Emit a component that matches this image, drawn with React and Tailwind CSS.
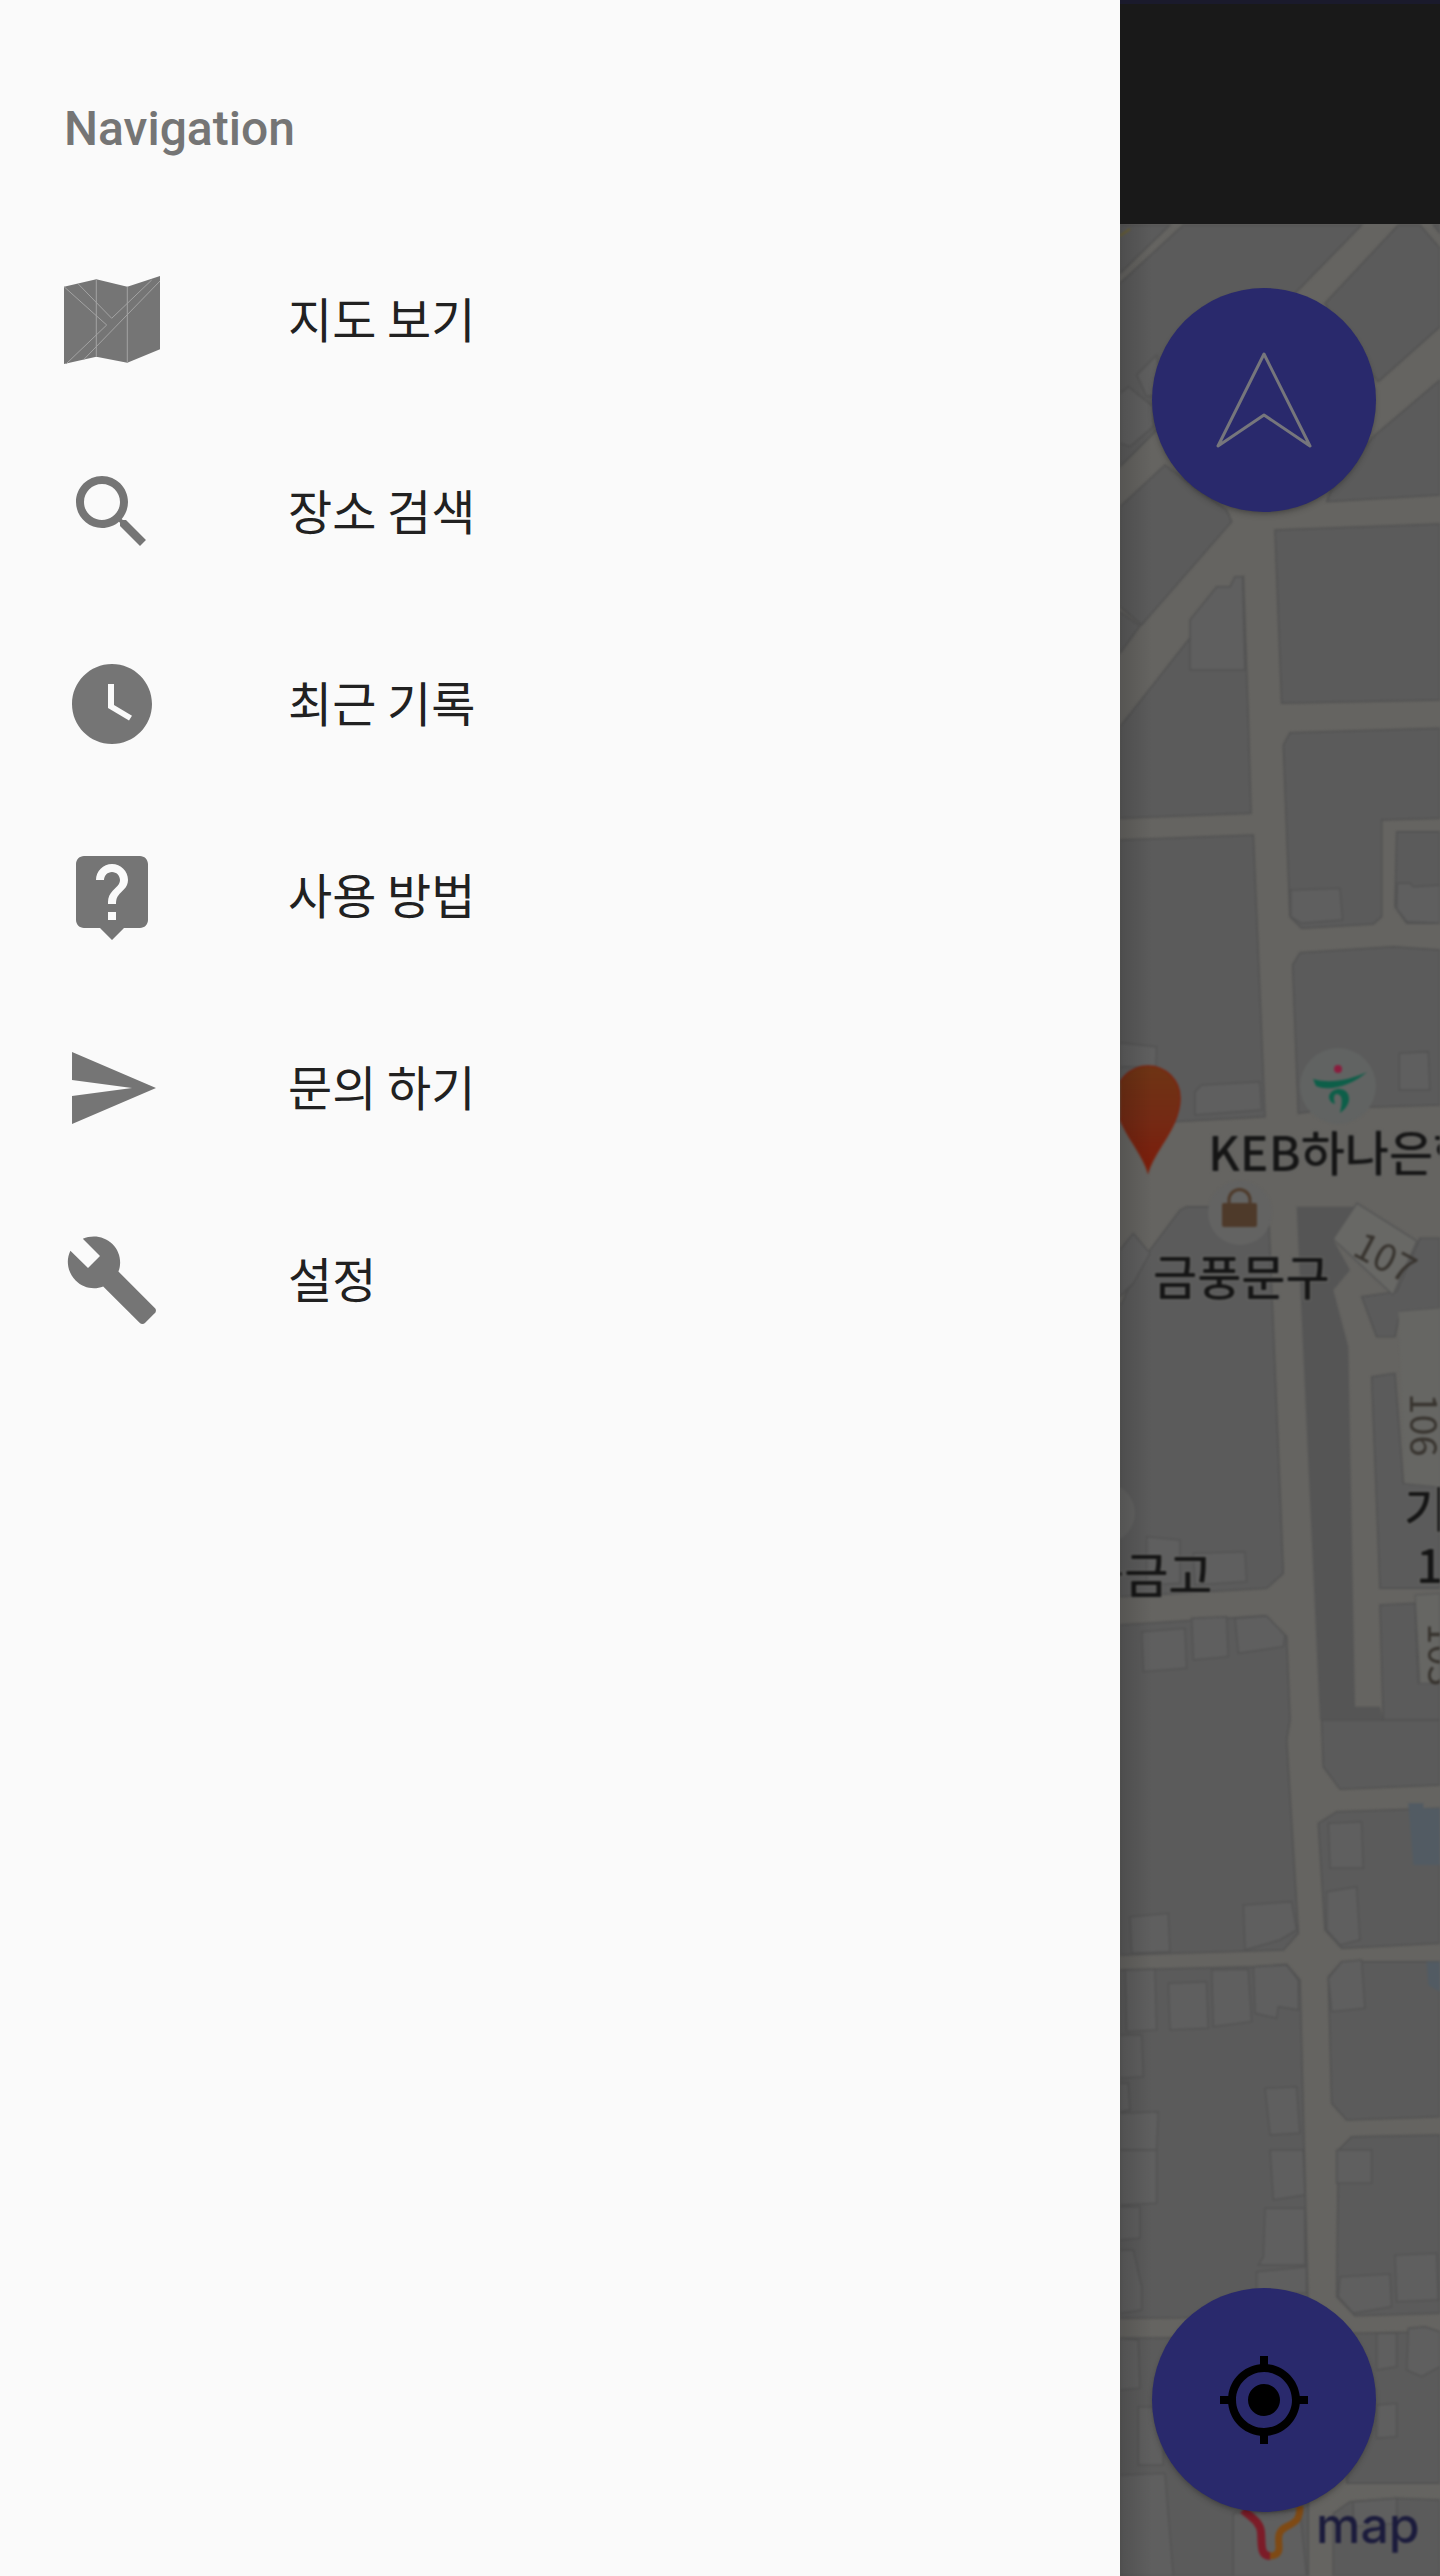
import React from 'react';

// map shapes are noted as read off the reference: x / y are 3x crop coordinates, base is the crop's top
const pts = (base, list) => list.map(([x, y]) => `${1120 + x / 3},${base + y / 3}`).join(' ');

const blocks = [
  [220, [[0,190],[190,15],[725,15],[540,205],[120,620],[0,740]]],
  [220, [[0,15],[150,15],[0,160]]],
  [220, [[615,250],[835,15],[900,15],[960,85],[960,320],[775,485],[700,400]]],
  [220, [[940,15],[960,15],[960,40]]],
  [220, [[760,650],[960,480],[960,825],[620,845],[640,790]]],
  [220, [[0,860],[135,735],[320,870],[335,905],[65,1215],[0,1160]]],
  [220, [[0,1175],[60,1218],[0,1300]]],
  [220, [[0,1520],[205,1260],[370,1070],[385,1500],[393,1780],[0,1795]]],
  [220, [[465,930],[960,912],[960,1440],[485,1450]]],
  [720, [[0,360],[400,345],[435,1190],[160,1205],[0,1200]]],
  [720, [[490,75],[510,38],[960,25],[960,295],[785,300],[785,590],[760,612],[545,625],[510,590]]],
  [720, [[830,335],[960,335],[960,610],[860,610],[825,560]]],
  [720, [[518,735],[540,698],[820,680],[960,690],[960,1155],[640,1165],[535,1180]]],
  [1220, [[0,260],[60,130],[180,-30],[200,-40],[445,-40],[490,1060],[440,1105],[0,1130]]],
  [1220, [[725,230],[830,215],[880,100],[900,55],[960,55],[960,265],[840,275],[825,350],[770,350]]],
  [1220, [[755,470],[825,460],[850,790],[960,800],[960,1105],[780,1105]]],
  [1220, [[780,1155],[885,1150],[895,1390],[960,1390],[960,1500],[790,1500]]],
  [1220, [[0,1215],[435,1187],[500,1250],[510,1500],[500,1560],[535,2140],[490,2190],[0,2205]]],
  [1720, [[605,0],[960,0],[960,195],[660,208],[610,140]]],
  [1720, [[595,310],[650,275],[960,265],[960,670],[665,685],[615,630]]],
  [1720, [[0,750],[400,740],[500,733],[540,780],[565,1790],[0,1795]]],
  [1720, [[625,770],[665,725],[960,725],[960,1190],[680,1200],[635,1150]]],
  [1720, [[655,1290],[695,1250],[960,1245],[960,1780],[705,1787],[650,1730]]],
  [2150, [[0,565],[565,560],[565,1278],[0,1278]]],
  [2150, [[700,550],[960,545],[960,1000],[680,1000]]],
  [2150, [[690,1055],[830,1045],[960,1050],[960,1278],[640,1278],[640,1090]]],
];

const buildings = [
  [220, [[210,1200],[290,1100],[330,1100],[345,1070],[368,1070],[375,1350],[210,1350]]],
  [220, [[50,465],[110,405],[130,520],[80,530]]],
  [220, [[0,520],[25,500],[100,560],[100,620],[30,680],[0,670]]],
  [720, [[512,510],[660,505],[668,600],[545,610],[512,590]]],
  [720, [[832,490],[870,490],[880,500],[960,495],[960,610],[860,605],[830,565]]],
  [720, [[0,968],[110,980],[108,1040],[0,1040]]],
  [720, [[225,1115],[245,1095],[420,1085],[425,1170],[225,1185]]],
  [720, [[838,1000],[925,995],[930,1110],[838,1110]]],
  [1220, [[0,90],[40,40],[90,100],[40,190],[0,230]]],
  [1220, [[220,1000],[375,995],[380,1085],[225,1095]]],
  [1220, [[80,950],[180,960],[180,1090],[80,1095]]],
  [1220, [[65,1235],[195,1225],[200,1345],[70,1355]]],
  [1220, [[215,1195],[320,1190],[325,1310],[220,1320]]],
  [1220, [[345,1195],[440,1188],[495,1245],[490,1280],[355,1300]]],
  [1720, [[30,590],[145,580],[150,695],[35,700]]],
  [1720, [[370,555],[515,545],[530,630],[480,660],[375,690]]],
  [1720, [[625,310],[725,305],[730,445],[630,445]]],
  [1720, [[620,515],[710,500],[720,660],[660,675],[620,630]]],
  [1720, [[15,750],[105,748],[110,930],[20,935]]],
  [1720, [[145,790],[260,785],[265,925],[150,930]]],
  [1720, [[275,750],[385,748],[395,905],[280,920]]],
  [1720, [[400,740],[500,735],[535,780],[535,870],[475,860],[470,895],[405,880]]],
  [1720, [[0,945],[65,945],[70,1070],[0,1075]]],
  [1720, [[0,1090],[25,1090],[30,1170],[0,1175]]],
  [1720, [[0,1180],[115,1175],[110,1290],[0,1290]]],
  [1720, [[435,1105],[530,1100],[540,1240],[450,1245]]],
  [1720, [[625,775],[665,725],[725,720],[735,865],[635,875]]],
  [2150, [[450,0],[550,0],[555,135],[460,150]]],
  [2150, [[435,175],[555,175],[555,345],[415,345],[430,320]]],
  [2150, [[410,365],[560,350],[560,430],[410,430]]],
  [2150, [[0,0],[110,0],[110,160],[0,165]]],
  [2150, [[0,170],[60,170],[60,265],[0,270]]],
  [2150, [[0,300],[40,300],[65,410],[65,480],[0,490]]],
  [2150, [[650,0],[755,0],[755,100],[650,100]]],
  [2150, [[825,315],[950,310],[955,450],[830,455]]],
  [2150, [[660,380],[810,372],[815,470],[700,490],[655,440]]],
  [2150, [[865,535],[915,530],[960,545],[960,650],[905,680],[860,660]]],
  [2150, [[0,565],[55,570],[60,715],[0,720]]],
  [2150, [[55,770],[130,770],[130,945],[55,945]]],
  [2150, [[0,975],[135,970],[160,1278],[0,1278]]],
  [2150, [[340,1090],[540,1080],[560,1278],[340,1278]]],
  [2150, [[770,550],[830,550],[830,650],[770,660]]],
  [2150, [[770,765],[830,760],[830,860],[770,865]]],
  [2150, [[700,1055],[830,1045],[830,1120],[700,1130]]],
];

const MapIcon = () => (
  <svg viewBox="0 0 96 96" className="w-24 h-24">
    <polygon points="0,14.7 32.3,7.3 63.3,14.7 96,4 96,77.3 63.3,90.7 32.3,84.7 0,92" fill="#757575" />
    <g fill="none" stroke="#a3a3a3" strokeWidth="1">
      <path d="M32.3 7.3V84.7M63.3 14.7V90.7" />
      <path d="M0 14.7L42.7 53 2 92M14.3 12L47.7 46.3 87.7 8M19.3 88L96 9" />
    </g>
  </svg>
);

const MaterialIcon = ({ d }) => (
  <svg viewBox="0 0 24 24" className="w-24 h-24" fill="#757575" fillRule="evenodd">
    <path d={d} />
  </svg>
);

const menuItems = [
  { label: '지도 보기', icon: <MapIcon /> },
  {
    label: '장소 검색',
    icon: <MaterialIcon d="M15.5 14h-.79l-.28-.27C15.41 12.59 16 11.11 16 9.5 16 5.91 13.09 3 9.5 3S3 5.91 3 9.5 5.91 16 9.5 16c1.61 0 3.09-.59 4.23-1.57l.27.28v.79l5 4.99L20.49 19l-4.99-5zm-6 0C7.01 14 5 11.99 5 9.5S7.01 5 9.5 5 14 7.01 14 9.5 11.99 14 9.5 14z" />,
  },
  {
    label: '최근 기록',
    icon: <MaterialIcon d="M11.99 2C6.47 2 2 6.48 2 12s4.47 10 9.99 10C17.52 22 22 17.52 22 12S17.52 2 11.99 2zM12.5 7H11v6l5.25 3.15.75-1.23-4.5-2.67z" />,
  },
  {
    label: '사용 방법',
    icon: <MaterialIcon d="M19 2H5c-1.11 0-2 .9-2 2v14c0 1.1.89 2 2 2h4l3 3 3-3h4c1.1 0 2-.9 2-2V4c0-1.1-.9-2-2-2zm-6 16h-2v-2h2v2zm2.07-7.75l-.9.92C13.45 11.9 13 12.5 13 14h-2v-.5c0-1.1.45-2.1 1.17-2.83l1.24-1.26c.37-.36.59-.86.59-1.41 0-1.1-.9-2-2-2s-2 .9-2 2H8c0-2.21 1.79-4 4-4s4 1.79 4 4c0 .88-.36 1.68-.93 2.25z" />,
  },
  {
    label: '문의 하기',
    icon: <MaterialIcon d="M2.01 21L23 12 2.01 3 2 10l15 2-15 2z" />,
  },
  {
    label: '설정',
    icon: <MaterialIcon d="M22.7 19l-9.1-9.1c.9-2.3.4-5-1.5-6.9-2-2-5-2.4-7.4-1.3L9 6 6 9 1.6 4.7C.4 7.1.9 10.1 2.9 12.1c1.9 1.9 4.6 2.4 6.9 1.5l9.1 9.1c.4.4 1 .4 1.4 0l2.3-2.3c.5-.4.5-1.1.1-1.4z" />,
  },
];

const MapDrawing = () => (
  <svg viewBox="1120 224 320 2352" className="block w-full h-full blur-[1px] font-['Noto_Sans_CJK_KR',sans-serif]">
    <defs>
      <linearGradient id="pinFill" x1="0" y1="0" x2="0" y2="1">
        <stop offset="0" stopColor="#6e3414" />
        <stop offset="0.5" stopColor="#742a14" />
        <stop offset="1" stopColor="#7c1c0a" />
      </linearGradient>
    </defs>

    {/* blocks and footprints */}
    <polygon points={pts(1220, [[530,-40],[730,-40],[640,60],[690,150],[640,210],[685,380],[705,1460],[780,1460],[790,1500],[600,1500]])} fill="#555555" />
    <g fill="#5b5b5b" stroke="#525252" strokeWidth="1.5">
      {blocks.map(([base, list], i) => <polygon key={i} points={pts(base, list)} />)}
    </g>
    <polygon points={pts(1220, [[835,275],[960,265],[960,800],[855,790]])} fill="#666663" />
    <polygon points={pts(1220, [[885,1125],[960,1120],[960,1390],[900,1390]])} fill="#666663" stroke="#555555" />
    <g fill="#5f5f5f" stroke="#535353" strokeWidth="1.5">
      {buildings.map(([base, list], i) => <polygon key={i} points={pts(base, list)} />)}
    </g>
    <polygon points={pts(1720, [[865,250],[910,250],[910,265],[960,265],[960,435],[880,435]])} fill="#525b63" />
    <polygon points={pts(1720, [[920,725],[960,725],[960,815],[925,795]])} fill="#525b63" />
    <path d="M1120 236L1130 229" stroke="#6e6330" strokeWidth="2" />

    {/* building 107 and house numbers */}
    <polygon points="1333,1239 1357,1203 1417,1241 1393,1295" fill="#686865" stroke="#555555" strokeWidth="1.5" />
    <text x="1385" y="1271" fontSize="38" textAnchor="middle" fill="#38342f" transform="rotate(28 1385 1258)">107</text>
    <text x="1423" y="1438" fontSize="38" textAnchor="middle" fill="#38342f" transform="rotate(90 1423 1425)">106</text>
    <text x="1441" y="1668" fontSize="38" textAnchor="middle" fill="#38342f" transform="rotate(90 1441 1655)">103</text>

    {/* pin */}
    <path d="M1148 1172C1142 1150 1116 1127 1116 1098A32 32 0 0 1 1180 1098C1180 1127 1154 1150 1148 1172Z" fill="url(#pinFill)" stroke="#7c2410" strokeWidth="1.5" />

    {/* POI badges */}
    <circle cx="1338" cy="1086" r="38" fill="#616362" />
    <circle cx="1338" cy="1069" r="4" fill="#8a1d3e" />
    <path d="M1313 1079C1330 1084 1350 1080 1367 1072C1352 1085 1330 1092 1316 1086Z" fill="#0d5f49" />
    <path d="M1329 1096C1332 1086 1350 1086 1349 1100C1348 1106 1344 1110 1340 1113C1342 1104 1344 1094 1336 1094C1333 1096 1334 1100 1335 1104C1331 1103 1329 1100 1329 1096Z" fill="#0d5f49" />

    <circle cx="1240" cy="1213" r="32" fill="#636362" />
    <rect x="1222" y="1203" width="35" height="24" rx="2" fill="#4e3a2a" />
    <path d="M1229 1204V1200A10.500 10.500 0 0 1 1250 1200V1204" fill="none" stroke="#4e3a2a" strokeWidth="3" />

    <circle cx="1105" cy="1513" r="30" fill="#636362" />

    {/* labels */}
    <g fill="#151515" stroke="#686866" strokeWidth="2" fontWeight="500" className="[paint-order:stroke]">
      <text x="1208" y="1171" fontSize="48">KEB하나은행</text>
      <text x="1153" y="1295" fontSize="48">금풍문구</text>
      <text x="1080" y="1593" fontSize="48">을금고</text>
      <text x="1404" y="1527" fontSize="48">기업</text>
      <text x="1416" y="1583" fontSize="48">1</text>
    </g>

    {/* tmap logo, its top is behind the button */}
    <path d="M1243 2510C1252 2518 1260 2522 1261 2532C1262 2545 1260 2556 1270 2556" fill="none" stroke="#7c1c28" strokeWidth="8" />
    <path d="M1300 2506C1300 2520 1296 2522 1286 2527C1276 2532 1279 2540 1279 2548C1279 2554 1275 2556 1270 2556" fill="none" stroke="#7f4a14" strokeWidth="7" />
    <text x="1316" y="2543" fontSize="50" fontWeight="500" fill="#1b1b3c" fontFamily="Inter, sans-serif">map</text>
  </svg>
);

export default function App() {
  return (
    <div className="flex w-[1440px] h-[2576px] overflow-hidden">
      {/* Drawer */}
      <aside className="w-[1120px] shrink-0 bg-[#fafafa]">
        <div className="h-[224px] pl-16 pt-[100px]">
          <h2 className="font-['Roboto',sans-serif] font-medium text-[48px] leading-[58px] text-[#757575]">Navigation</h2>
        </div>
        <ul>
          {menuItems.map(item => (
            <li key={item.label} className="flex items-center h-[192px] pl-16">
              {item.icon}
              <span className="ml-[128px] mb-[7px] font-['Noto_Sans_CJK_KR',sans-serif] text-[48px] text-[#212121]">{item.label}</span>
            </li>
          ))}
        </ul>
      </aside>

      {/* Dimmed map behind the drawer */}
      <main className="flex-1 flex flex-col">
        <div className="h-[224px] shrink-0 bg-[#191919] border-t-4 border-[#1a1a2c]" />
        <div className="relative flex-1 overflow-hidden bg-[#656461]">
          <MapDrawing />
          <div className="absolute inset-y-0 left-0 w-8 bg-gradient-to-r from-black/15 to-transparent" />

          <button className="absolute left-8 top-16 flex items-center justify-center w-[224px] h-[224px] rounded-full bg-[#29296c] shadow-md shadow-black/20">
            <svg viewBox="0 0 96 96" className="w-24 h-24 overflow-visible">
              <path d="M48 2L94 94 48 63 2 94Z" fill="none" stroke="#76767c" strokeWidth="3" strokeLinejoin="round" />
            </svg>
          </button>

          <button className="absolute left-8 bottom-16 flex items-center justify-center w-[224px] h-[224px] rounded-full bg-[#29296c] shadow-md shadow-black/20">
            <svg viewBox="0 0 24 24" className="w-24 h-24" fill="#000000">
              <path d="M12 8c-2.21 0-4 1.79-4 4s1.79 4 4 4 4-1.79 4-4-1.790-4-4-4zm8.940 3c-.46-4.170-3.770-7.480-7.940-7.940V1h-2v2.060C6.830 3.520 3.520 6.830 3.060 11H1v2h2.060c.46 4.170 3.770 7.480 7.940 7.940V23h2v-2.060c4.170-.46 7.480-3.770 7.940-7.940H23v-2h-2.060zM12 19c-3.870 0-7-3.130-7-7s3.130-7 7-7 7 3.130 7 7-3.130 7-7 7z" />
            </svg>
          </button>
        </div>
      </main>
    </div>
  );
}
